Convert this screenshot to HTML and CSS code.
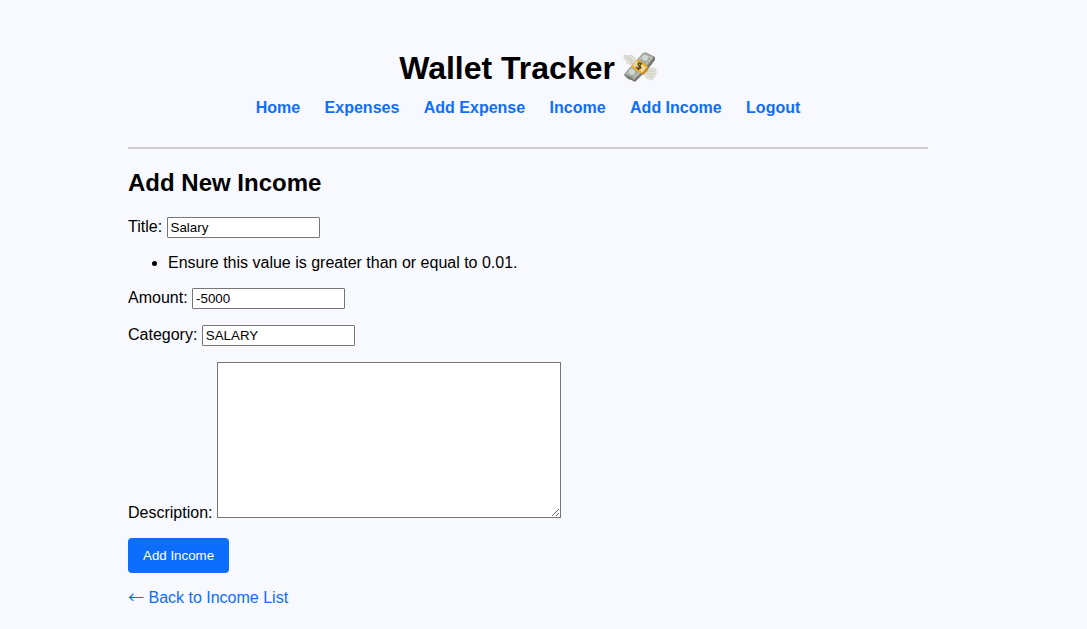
FILE: index.html
```html
<!DOCTYPE html>
<html lang="en">
<head>
<meta charset="utf-8">
<title>Wallet Tracker</title>
<link rel="stylesheet" href="styles.css">
</head>
<body>
<header class="site-header">
<h1 class="brand">Wallet Tracker
<svg class="money" viewBox="0 0 34 32" aria-hidden="true">
<path d="M14 10 L11 5 Q9 2 6 4 L1 3 Q0 6 3 8 Q3 11 6 12 Q8 14 12 13 Z" fill="#e2e2da" stroke="#c9c9c0" stroke-width=".6"/>
<path d="M3 5 L9 7 M5 8 L10 9 M7 11 L11 11" stroke="#b8b8ae" stroke-width=".6" fill="none"/>
<path d="M22 17 L29 16 Q34 16 33 19 Q34 22 32 23 Q32 27 28 28 Q23 27 21 22 Z" fill="#e2e2d8" stroke="#c9c9bd" stroke-width=".6"/>
<path d="M24 19 L31 19 M24 22 L30 22 M26 25 L30 24" stroke="#b8b8ae" stroke-width=".6" fill="none"/>
<path d="M1 23 L10 13 L20 1 Q22 0 24 1 L32 5 L32 8 L25 17 L20 22 L12 30 Q9 28 5 27 Z" fill="#777970"/>
<path d="M1 22 L10 12 L20 1 Q22 0 24 1 L31 5 L24 14 L19 20 L11 28 Q9 25 5 24 Z" fill="#a5a89e"/>
<path d="M4 22 L10 15 L17 20 L11 25 M16 8 L21 3 L29 6 L23 12" fill="none" stroke="#ced0c6" stroke-width="1"/>
<circle cx="9" cy="20" r="3" fill="#cbd8cf"/>
<circle cx="22" cy="6" r="3" fill="#cbd8cf"/>
<path d="M14 8 L25 15 L25 18 L20 23 L19 20 L9 14 Z" fill="#c88a20"/>
<path d="M14 8 L24 15 L19 21 L9 14 Z" fill="#efd99d"/>
<path d="M14 8 L24 15 M9 14 L19 21" stroke="#f0b020" stroke-width="2"/>
<path d="M19 12 Q15 10 15 12 Q15 14 17 14 Q19 16 16 17 L13 15 M18 11 L15 18" fill="none" stroke="#594416" stroke-width="1.3"/>
</svg></h1>
<nav class="nav">
<a href="#">Home</a>
<a href="#">Expenses</a>
<a href="#">Add Expense</a>
<a href="#">Income</a>
<a href="#">Add Income</a>
<a href="#">Logout</a>
</nav>
</header>
<hr class="divider">
<main>
<h2 class="title">Add New Income</h2>
<form class="form">
<p class="field"><label for="title">Title:</label> <input class="input" id="title" type="text" value="Salary"></p>
<ul class="errors"><li>Ensure this value is greater than or equal to 0.01.</li></ul>
<p class="field"><label for="amount">Amount:</label> <input class="input" id="amount" type="text" value="-5000"></p>
<p class="field"><label for="category">Category:</label> <input class="input" id="category" type="text" value="SALARY"></p>
<p class="field"><label for="description">Description:</label> <textarea class="area" id="description" cols="40" rows="10"></textarea></p>
<button class="submit" type="submit">Add Income</button>
</form>
<p class="back"><a href="#"><span class="arrow">←</span> Back to Income List</a></p>
</main>
</body>
</html>
```
FILE: styles.css
```css
body {
  max-width: 800px;
  margin: 48px auto 0 128px;
  background: #f8f9fe;
  color: #000;
  font-family: "Liberation Sans", Arial, sans-serif;
  font-size: 16px;
}
.site-header { text-align: center; }
.brand { margin: 0 0 10px; font-size: 32px; line-height: 40px; }
.money { width: 34px; height: 32px; margin-left: -1px; vertical-align: -5px; }
.nav { margin-bottom: 29px; line-height: 20px; }
.nav a { margin: 0 10px; color: #0d6efd; font-weight: bold; text-decoration: none; }
.divider { margin: 0; border: 0; border-top: 2px solid #ccc; }
.title { margin: 20px 0; font-size: 24px; line-height: 28px; }
.field { margin: 16px 0; }
.errors { margin: 16px 0; padding-left: 40px; line-height: 18px; }
.input, .area { box-sizing: border-box; border: 1px solid #767676; border-radius: 0; background: #fff; }
.input { width: 153px; height: 21px; padding: 1px 3px; border-radius: 1px; font-family: "Liberation Sans", Arial, sans-serif; }
.area { width: 344px; height: 156px; padding: 2px; font: 13px "Liberation Mono", monospace; }
.submit { padding: 10px 15px; border: 0; border-radius: 4px; background: #0d6efd; color: #fff; font-family: "Liberation Sans", Arial, sans-serif; line-height: 15px; }
.back { margin: 16px 0; line-height: 18px; }
.back a { color: #0d6efd; text-decoration: none; }
.arrow { font-family: "Noto Sans CJK JP", sans-serif; line-height: 0; }
```
